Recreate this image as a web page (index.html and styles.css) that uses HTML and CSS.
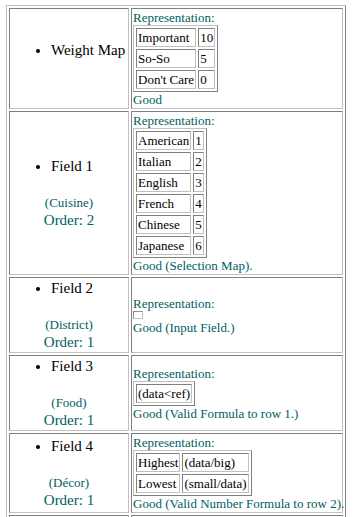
FILE: index.html
```html
<!DOCTYPE html>
<html lang="en">

<head>
    <meta charset="utf-8">
    <title>Field Weights</title>
    <link rel="stylesheet" href="styles.css">
</head>

<body>
    <table class="fields">
        <tr>
            <td class="name">
                <ul class="field solo">
                    <li>Weight Map</li>
                </ul>
            </td>
            <td class="rep">
                <div class="note">Representation:</div>
                <table class="map">
                    <tr><td>Important</td><td>10</td></tr>
                    <tr><td>So-So</td><td>5</td></tr>
                    <tr><td>Don't Care</td><td>0</td></tr>
                </table>
                <div class="note">Good</div>
            </td>
        </tr>
        <tr>
            <td class="name">
                <ul class="field">
                    <li>Field 1</li>
                </ul>
                <div class="kind">(Cuisine)</div>
                <div class="order">Order: 2</div>
            </td>
            <td class="rep">
                <div class="note">Representation:</div>
                <table class="map">
                    <tr><td>American</td><td>1</td></tr>
                    <tr><td>Italian</td><td>2</td></tr>
                    <tr><td>English</td><td>3</td></tr>
                    <tr><td>French</td><td>4</td></tr>
                    <tr><td>Chinese</td><td>5</td></tr>
                    <tr><td>Japanese</td><td>6</td></tr>
                </table>
                <div class="note">Good (Selection Map).</div>
            </td>
        </tr>
        <tr>
            <td class="name">
                <ul class="field">
                    <li>Field 2</li>
                </ul>
                <div class="kind">(District)</div>
                <div class="order">Order: 1</div>
            </td>
            <td class="rep">
                <div class="note">Representation:</div>
                <div class="input-box"></div>
                <div class="note">Good (Input Field.)</div>
            </td>
        </tr>
        <tr>
            <td class="name">
                <ul class="field">
                    <li>Field 3</li>
                </ul>
                <div class="kind">(Food)</div>
                <div class="order">Order: 1</div>
            </td>
            <td class="rep">
                <div class="note">Representation:</div>
                <table class="map">
                    <tr><td>(data&lt;ref)</td></tr>
                </table>
                <div class="note">Good (Valid Formula to row 1.)</div>
            </td>
        </tr>
        <tr>
            <td class="name">
                <ul class="field">
                    <li>Field 4</li>
                </ul>
                <div class="kind">(Décor)</div>
                <div class="order">Order: 1</div>
            </td>
            <td class="rep">
                <div class="note">Representation:</div>
                <table class="map">
                    <tr><td>Highest</td><td>(data/big)</td></tr>
                    <tr><td>Lowest</td><td>(small/data)</td></tr>
                </table>
                <div class="note">Good (Valid Number Formula to row 2).</div>
            </td>
        </tr>
        <tr class="more">
            <td class="name"></td>
            <td class="rep"></td>
        </tr>
    </table>
</body>

</html>
```

FILE: styles.css
```css
body {
    margin: 5px 6px 0;
    font-family: "Liberation Serif", "Times New Roman", serif;
    background-color: #ffffff;
    color: #000000;
}

/* old-school bevelled table: raised frame, sunken cells */
.fields,
.map {
    border-collapse: separate;
    border-spacing: 2px;
    border: 1px solid;
    border-color: #c0c0c0 #808080 #808080 #c0c0c0;
}

.fields {
    width: 340px;
    table-layout: fixed;
}

.fields > tbody > tr > td,
.map td {
    border: 1px solid;
    border-color: #808080 #c0c0c0 #c0c0c0 #808080;
    padding: 1px;
}

.name {
    width: 116px;
    vertical-align: middle;
}

.field {
    margin: 0 0 20px 0;
    padding-left: 40px;
    font-size: 15px;
    line-height: 18px;
    white-space: nowrap;
}

.field.solo {
    margin-bottom: 17px;
}

.kind {
    text-align: center;
    font-size: 13px;
    line-height: 16px;
    color: #006060;
}

.order {
    text-align: center;
    font-size: 15px;
    line-height: 18px;
    color: #006060;
}

.rep {
    vertical-align: middle;
    font-size: 13px;
    line-height: 15px;
}

.note {
    color: #006060;
    white-space: nowrap;
}

.map {
    font-size: 13px;
    line-height: 15px;
}

.map td {
    white-space: nowrap;
}

/* the empty text input drawn as a tiny sunken box */
.input-box {
    width: 8px;
    height: 6px;
    border: 1px solid;
    border-color: #909090 #c0c0c0 #c0c0c0 #909090;
    margin-bottom: 1px;
}

.more td {
    height: 40px;
}
```
